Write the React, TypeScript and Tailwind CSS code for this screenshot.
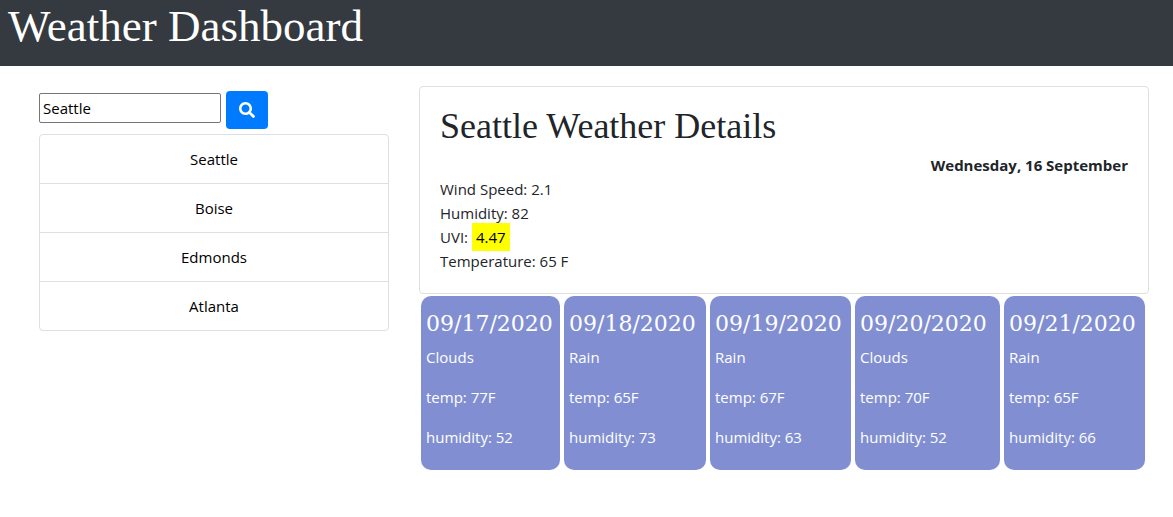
import { FaSearch } from "react-icons/fa";

const cities = ["Seattle", "Boise", "Edmonds", "Atlanta"];

const forecast = [
  { date: "09/17/2020", sky: "Clouds", temp: 77, humidity: 52 },
  { date: "09/18/2020", sky: "Rain", temp: 65, humidity: 73 },
  { date: "09/19/2020", sky: "Rain", temp: 67, humidity: 63 },
  { date: "09/20/2020", sky: "Clouds", temp: 70, humidity: 52 },
  { date: "09/21/2020", sky: "Rain", temp: 65, humidity: 66 },
];

export default function App() {
  return (
    <div className="bg-white font-['Open_Sans',sans-serif] text-[15px] leading-6 text-[#212529]">
      <header className="bg-[#343a40] px-2 pt-0.5 pb-4">
        <h1 className="font-['Liberation_Serif',serif] text-[45px] leading-[48px] text-white">Weather Dashboard</h1>
      </header>

      <div className="grid grid-cols-[350fr_730fr] gap-[30px] pt-5 pr-6 pl-[39px]">
        <aside>
          <form className="flex items-center gap-[5px] pt-[5px]" onSubmit={(e) => e.preventDefault()}>
            <input
              type="text"
              aria-label="City"
              defaultValue="Seattle"
              className="mb-1 h-[30px] w-[182px] rounded-xs border border-[#767676] px-[3px] text-black"
            />
            <button
              type="submit"
              aria-label="Search"
              className="flex h-[38px] w-[42px] items-center justify-center rounded-sm bg-[#007bff] text-white"
            >
              <FaSearch size={16} />
            </button>
          </form>
          <ul className="mt-[5px] divide-y divide-[#dfdfdf] rounded-sm border border-[#dfdfdf] text-center text-black">
            {cities.map((city) => (
              <li key={city}>
                <button type="button" className="w-full py-3">{city}</button>
              </li>
            ))}
          </ul>
        </aside>

        <main>
          <section className="rounded-sm border border-[#dfdfdf] p-5">
            <h2 className="mb-2 font-['Liberation_Serif',serif] text-[36px] leading-[38px]">Seattle Weather Details</h2>
            <p className="text-right font-bold">Wednesday, 16 September</p>
            <p>Wind Speed: 2.1</p>
            <p>Humidity: 82</p>
            <p>
              UVI: <span className="bg-[yellow] p-1 text-black">4.47</span>
            </p>
            <p>Temperature: 65 F</p>
          </section>

          <div className="mt-0.5 mr-1 ml-0.5 grid grid-cols-[139fr_142fr_141fr_145fr_141fr] gap-1">
            {forecast.map((day) => (
              <article key={day.date} className="rounded-[10px] bg-[#818fd2] px-[5px] pt-3 pb-[21px] text-white">
                <h3 className="mb-[5px] font-['DejaVu_Serif',serif] text-[22px] leading-8">{day.date}</h3>
                <div className="flex flex-col gap-4">
                  <p>{day.sky}</p>
                  <p>temp: {day.temp}F</p>
                  <p>humidity: {day.humidity}</p>
                </div>
              </article>
            ))}
          </div>
        </main>
      </div>
    </div>
  );
}
